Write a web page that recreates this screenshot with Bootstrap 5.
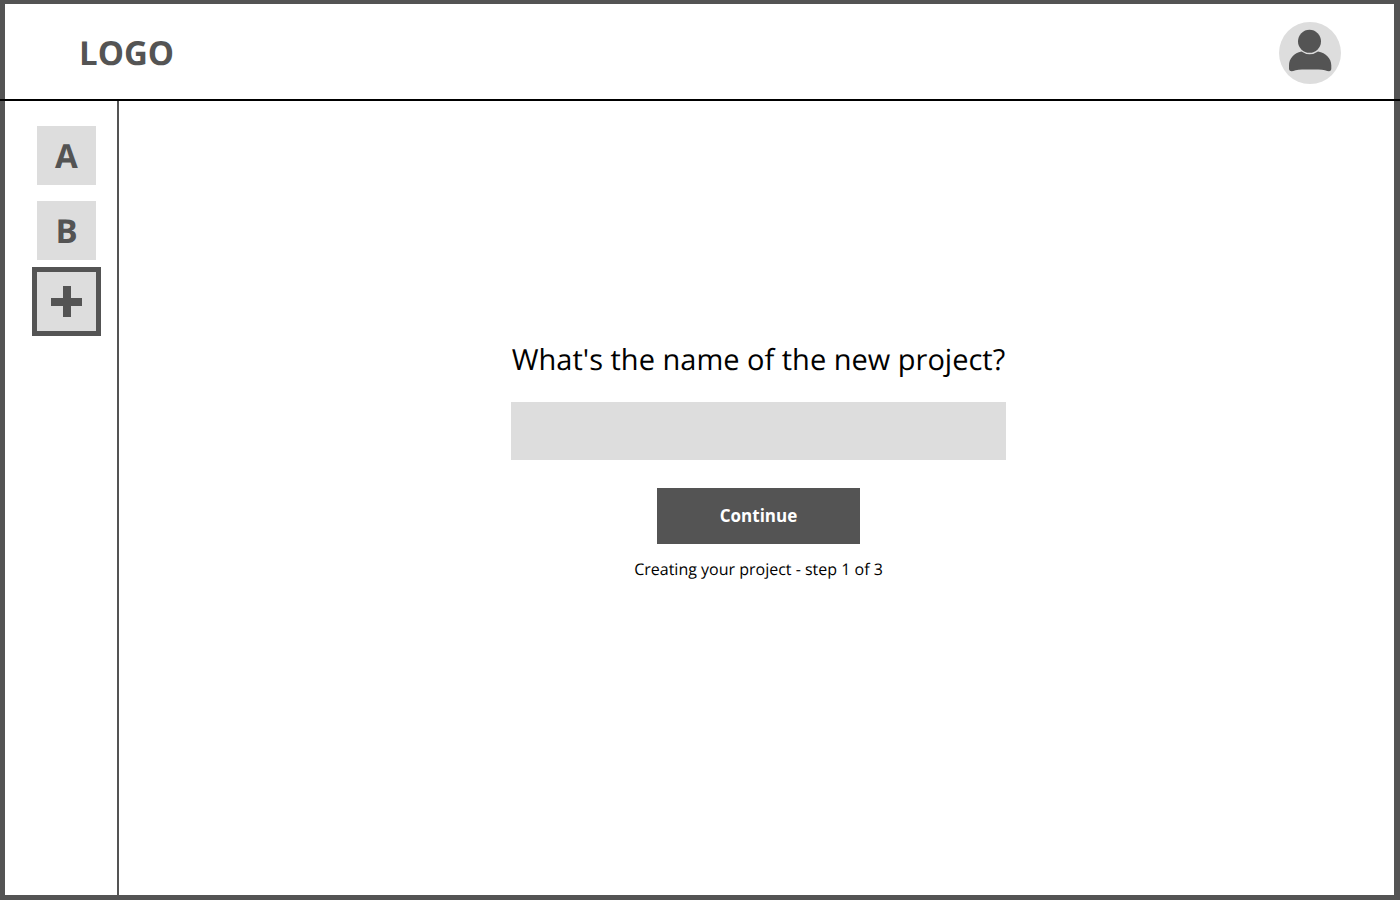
<!DOCTYPE html>
<html lang="en">
<head>
<meta charset="utf-8">
<meta name="viewport" content="width=device-width, initial-scale=1">
<title>New project</title>
<link href="https://cdn.jsdelivr.net/npm/bootstrap@5.3.0/dist/css/bootstrap.min.css" rel="stylesheet">
<style>
  :root { --ink: #545454; --soft: #ddd; }
  body { font-family: "Open Sans", sans-serif; color: #000; text-rendering: geometricPrecision; }
  .shell { border: 5px solid var(--ink); border-top-width: 4px; border-right-width: 6px; }
  .topbar { height: 97px; padding: 2px 53px 2px 74px; }
  /* the rule runs across the window frame as well */
  .topbar::after { content: ""; position: absolute; left: -5px; right: -6px; bottom: 0; height: 2px; background: #000; }
  .brand { font-size: 33px; line-height: 40px; font-weight: 700; color: var(--ink); }
  .avatar { width: 62px; height: 62px; }
  .avatar svg { display: block; }
  .rail { width: 114px; padding: 25px 23px 25px 32px; gap: 16px; border-right: 2px solid var(--ink); }
  .tile { width: 59px; height: 59px; background: var(--soft); color: var(--ink); font-size: 33px; line-height: 40px; font-weight: 700; text-decoration: none; }
  .tile-active { outline: 5px solid var(--ink); margin-top: -4px; }
  .stage { padding-bottom: 76px; }
  .setup { width: 495px; }
  .question { font-size: 29px; line-height: 40px; margin-bottom: 22px; }
  .name-field { height: 58px; background: var(--soft); margin-bottom: 28px; font-size: 20px; }
  .name-field:focus { background: var(--soft); }
  .btn-next { width: 203px; height: 56px; background: var(--ink); color: #fff; font-size: 17px; line-height: 24px; margin-bottom: 13px; }
  .btn-next:hover { background: #444; color: #fff; }
  .progress-note { font-size: 16px; line-height: 24px; }
</style>
</head>
<body>
<div class="shell min-vh-100 d-flex flex-column bg-white">
  <header class="topbar position-relative d-flex align-items-center justify-content-between">
    <a class="brand text-decoration-none" href="#">LOGO</a>
    <button class="avatar btn p-0 border-0 rounded-circle" type="button" aria-label="Account">
      <svg width="62" height="62" viewBox="0 0 62 62" aria-hidden="true">
        <circle cx="31" cy="31" r="31" fill="#ddd"/>
        <circle cx="30.500" cy="19.300" r="11.500" fill="#545454"/>
        <path d="M22.500 29.500C15 31 10 36.500 10 43.500V46.500C10 48.500 11 49.200 12.500 49.200C14.500 49.200 18 47.500 23 47.500H39.500C44.500 47.500 48 49.200 50 49.200C51.500 49.200 52.300 48.500 52.300 46.500V43.500C52.300 36.500 47 31 39 29.500Q35 32.300 30.700 32.300Q26.500 32.300 22.500 29.500Z" fill="#545454"/>
      </svg>
    </button>
  </header>
  <div class="d-flex flex-grow-1">
    <nav class="rail d-flex flex-column flex-shrink-0" aria-label="Projects">
      <a class="tile d-flex align-items-center justify-content-center" href="#">A</a>
      <a class="tile d-flex align-items-center justify-content-center" href="#">B</a>
      <a class="tile tile-active d-flex align-items-center justify-content-center" href="#" aria-label="New project" aria-current="page">
        <svg width="31" height="31" viewBox="0 0 31 31" aria-hidden="true"><path d="M12 0h8v12h11v8H20v11h-8V20H0v-8h12z" fill="currentColor"/></svg>
      </a>
    </nav>
    <main class="stage flex-grow-1 d-flex align-items-center justify-content-center ps-1">
      <form class="setup d-flex flex-column align-items-center">
        <label class="question text-nowrap" for="project-name">What's the name of the new project?</label>
        <input class="name-field form-control border-0 rounded-0" type="text" id="project-name">
        <button class="btn-next btn border-0 rounded-0 fw-bold" type="button">Continue</button>
        <p class="progress-note mb-0">Creating your project - step 1 of 3</p>
      </form>
    </main>
  </div>
</div>
<script src="https://cdn.jsdelivr.net/npm/bootstrap@5.3.0/dist/js/bootstrap.bundle.min.js"></script>
</body>
</html>
